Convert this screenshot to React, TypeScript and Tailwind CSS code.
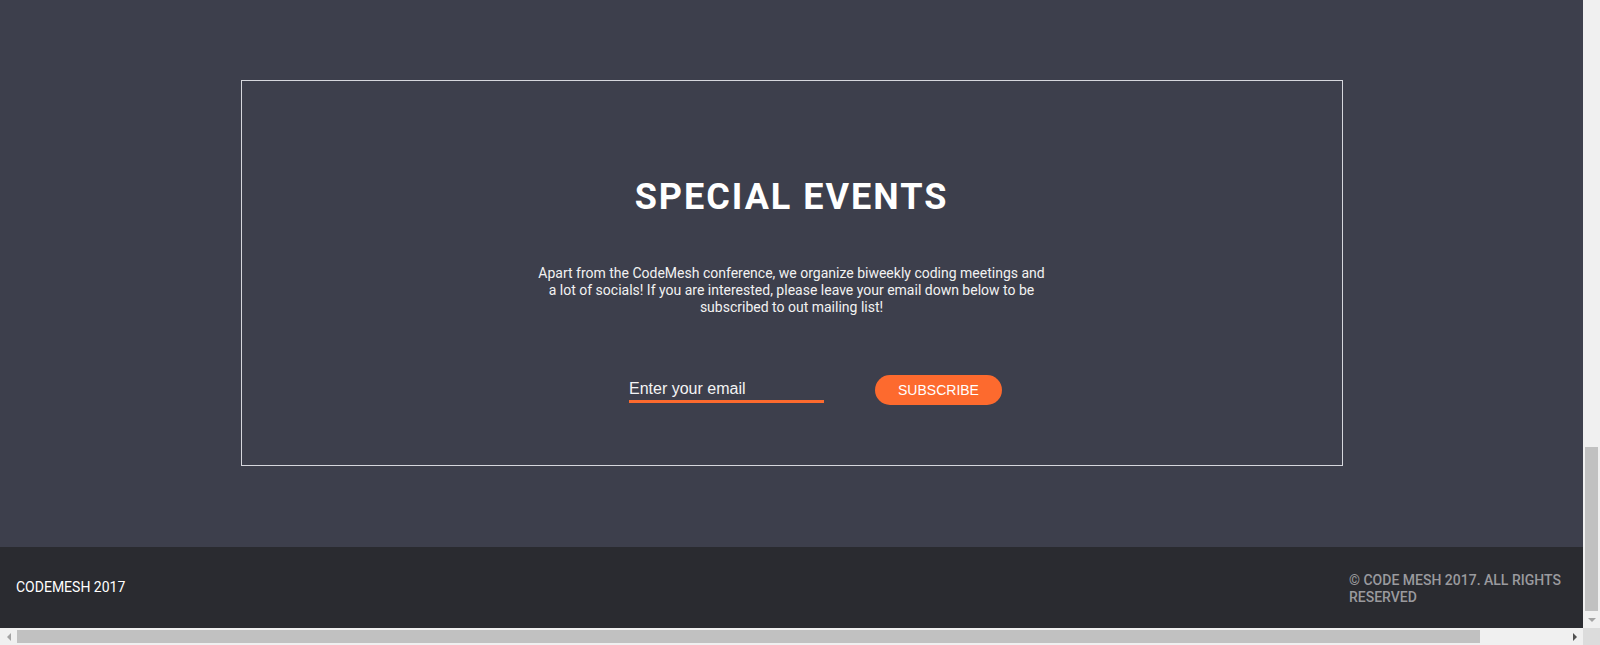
import React from "react";

export default function App() {
  return (
    <div className="w-[1600px] h-[645px] flex flex-col overflow-hidden bg-[#f0f0f0]" style={{ fontFamily: "Roboto, 'Liberation Sans', sans-serif" }}>
      <div className="flex h-[628px]">
        <div className="w-[1583px] flex flex-col">
          <section className="bg-[#3d3f4c] pt-[80px] pb-[81px] flex justify-center">
            <div className="w-[1102px] h-[386px] border border-[#d6d7dd] flex flex-col items-center pt-[95px]">
              <h2 className="text-[36px] leading-[42px] font-bold tracking-[2px] text-white font-['Roboto',sans-serif]">SPECIAL EVENTS</h2>
              <p className="mt-[47px] w-[512px] text-center text-[14px] leading-[17px] text-[#f2f2f2]">
                Apart from the CodeMesh conference, we organize biweekly coding meetings and a lot of socials! If you are interested, please leave your email down below to be subscribed to out mailing list!
              </p>
              <div className="mt-[59px] flex items-center justify-center">
                <input
                  type="email"
                  placeholder="Enter your email"
                  className="ml-[48px] w-[195px] h-[25px] bg-transparent border-0 border-b-[3px] border-[#fd6a2e] outline-none text-[16px] text-white placeholder:text-[#f4f4f4] font-['Liberation_Sans',Arial,sans-serif] px-0"
                />
                <button className="ml-[51px] w-[127px] h-[30px] rounded-full bg-[#fd6a2e] text-white text-[14px] font-['Liberation_Sans',Arial,sans-serif]">
                  SUBSCRIBE
                </button>
              </div>
            </div>
          </section>
          <footer className="h-[81px] bg-[#2a2b30] flex items-center justify-between px-[16px]">
            <div className="text-[14px] leading-[17px] text-white">CODEMESH 2017</div>
            <div className="w-[218px] pt-[2px] text-[14px] leading-[17px] font-medium text-[#9a9a9e]">© CODE MESH 2017. ALL RIGHTS RESERVED</div>
          </footer>
        </div>
        <div className="w-[17px] h-[628px] bg-[#f0f0f0] flex flex-col">
          <div className="h-[447px]" />
          <div className="h-[164px] mx-[2px] bg-[#c1c1c1]" />
          <div className="h-[17px] flex items-center justify-center">
            <div className="w-0 h-0 border-l-[4px] border-r-[4px] border-t-[4px] border-l-transparent border-r-transparent border-t-[#a3a3a3]" />
          </div>
        </div>
      </div>
      <div className="h-[17px] flex bg-[#f0f0f0]">
        <div className="w-[17px] flex items-center justify-center">
          <div className="w-0 h-0 border-t-[4px] border-b-[4px] border-r-[4px] border-t-transparent border-b-transparent border-r-[#a3a3a3]" />
        </div>
        <div className="w-[1463px] my-[2px] bg-[#c1c1c1]" />
        <div className="w-[86px]" />
        <div className="w-[17px] flex items-center justify-center">
          <div className="w-0 h-0 border-t-[4px] border-b-[4px] border-l-[4px] border-t-transparent border-b-transparent border-l-[#505050]" />
        </div>
        <div className="w-[17px] bg-[#dcdcdc]" />
      </div>
    </div>
  );
}
